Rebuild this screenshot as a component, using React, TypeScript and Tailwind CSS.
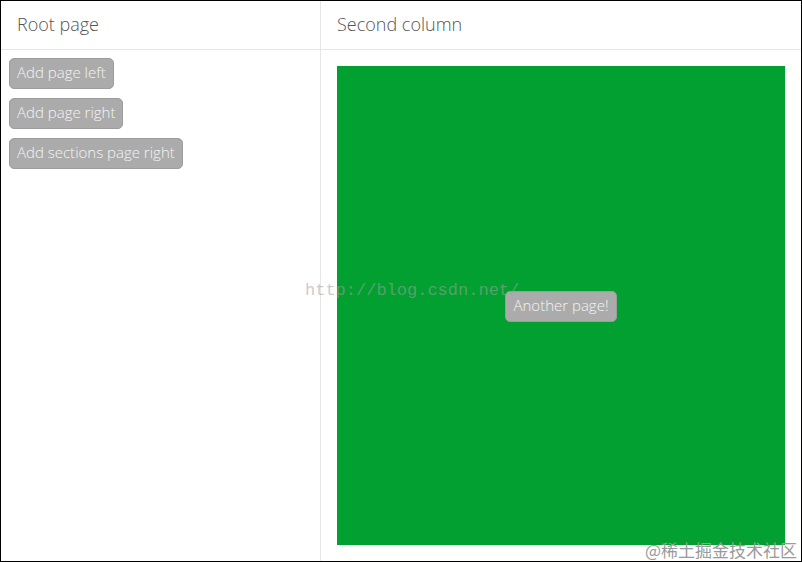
import React from "react";

const font = { fontFamily: '"Open Sans", "Noto Sans", sans-serif' };

function Btn({ children }: { children: React.ReactNode }) {
  return (
    <button
      className="h-[31px] px-[7px] pb-[3px] rounded-[5px] bg-[#ababab] border border-[#9c9c9c] text-[#f4f4f4] text-[15px] font-light leading-none whitespace-nowrap"
      style={font}
    >
      {children}
    </button>
  );
}

export default function App() {
  return (
    <div className="relative w-[802px] h-[562px] border border-black bg-white flex overflow-hidden" style={font}>
      <div className="w-[320px] h-full border-r border-[#e6e6e6] flex flex-col">
        <div className="h-[49px] border-b border-[#e6e6e6] flex items-center pl-4 pb-[2px] text-[18px] font-light text-[#555]">
          Root page
        </div>
        <div className="flex flex-col items-start gap-[9px] p-2">
          <Btn>Add page left</Btn>
          <Btn>Add page right</Btn>
          <Btn>Add sections page right</Btn>
        </div>
      </div>
      <div className="flex-1 h-full flex flex-col">
        <div className="h-[49px] border-b border-[#e6e6e6] flex items-center pl-4 pb-[2px] text-[18px] font-light text-[#555]">
          Second column
        </div>
        <div className="flex-1 p-4 flex">
          <div className="flex-1 bg-[#02a031] flex items-center justify-center">
            <div className="mt-[2px]">
              <Btn>Another page!</Btn>
            </div>
          </div>
        </div>
      </div>
      <div
        className="absolute left-[304px] top-[281px] text-[17px] text-[rgba(160,160,160,0.55)] leading-none pointer-events-none"
        style={{ fontFamily: '"Liberation Mono", monospace' }}
      >
        http://blog.csdn.net/
      </div>
      <div
        className="absolute right-[4px] bottom-[3px] text-[17px] text-[#9a9a9a] leading-none pointer-events-none"
        style={{ fontFamily: '"Noto Sans CJK SC", sans-serif' }}
      >
        @稀土掘金技术社区
      </div>
    </div>
  );
}
